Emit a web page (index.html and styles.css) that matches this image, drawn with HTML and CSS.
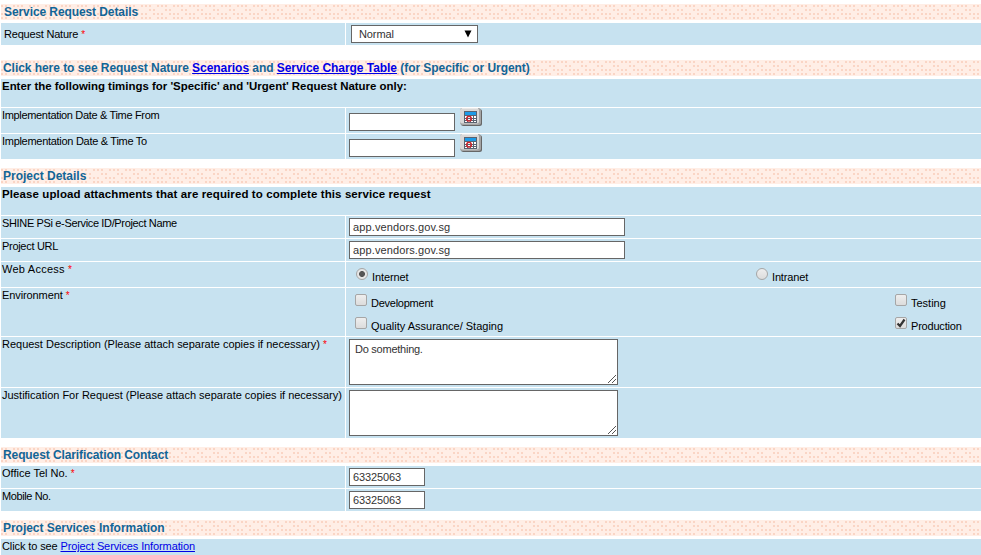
FILE: index.html
```html
<!DOCTYPE html>
<html lang="en">
<head>
<meta charset="utf-8">
<title>Service Request</title>
<link rel="stylesheet" href="styles.css">
</head>
<body>
<svg class="defs" width="0" height="0">
  <symbol id="cal" viewBox="0 0 22 18">
    <rect x="1" y="1" width="21" height="17" rx="2.5" fill="#666"/>
    <rect x="0" y="0" width="21" height="17" rx="2.5" fill="#a4a4a4"/>
    <rect x="0" y="0" width="19" height="15.5" rx="2.5" fill="#d8d8d8"/>
    <path d="M2 0.5H18" stroke="#e8e8e8"/>
    <rect x="4" y="3" width="13" height="12" fill="#5b6370"/>
    <rect x="5" y="4" width="11" height="3" fill="#1d9be8"/>
    <path d="M5 8h2v2h-2zM8 8h2v2h-2zM11 8h2v2h-2zM14 8h2v2h-2zM5 11h2v1h-2zM8 11h2v1h-2zM11 11h2v1h-2zM14 11h2v1h-2zM5 13h2v1h-2zM8 13h2v1h-2zM11 13h2v1h-2zM14 13h2v1h-2z" fill="#fff"/>
    <circle cx="9" cy="10.8" r="2.4" fill="none" stroke="#d8232a" stroke-width="1.3"/>
  </symbol>
</svg>
<main class="form">
  <h2 class="band first"><span class="t1">Service Request Details</span></h2>
  <div class="row h22 inset">
    <div class="label"><span class="t2">Request Nature</span> <i>*</i></div>
    <div class="cell"><div class="select"><span class="t13">Normal</span><svg width="8" height="8"><path d="M0.5 0.5H7.5L4 7.5Z"/></svg></div></div>
  </div>

  <h2 class="band second"><span class="t3">Click here to see Request Nature <a>Scenarios</a> and <a>Service Charge Table</a> (for Specific or Urgent)</span></h2>
  <div class="row full"><b class="t4">Enter the following timings for 'Specific' and 'Urgent' Request Nature only:</b></div>
  <div class="row h25"><div class="label"><span class="t5">Implementation Date &amp; Time From</span></div><div class="cell date"><div class="input short"></div><svg class="cal" width="22" height="18"><use href="#cal"/></svg></div></div>
  <div class="row h25"><div class="label"><span class="t6">Implementation Date &amp; Time To</span></div><div class="cell date"><div class="input short"></div><svg class="cal" width="22" height="18"><use href="#cal"/></svg></div></div>

  <h2 class="band"><span class="t7">Project Details</span></h2>
  <div class="row full"><b class="t8">Please upload attachments that are required to complete this service request</b></div>
  <div class="row h22"><div class="label"><span class="t9">SHINE PSi e-Service ID/Project Name</span></div><div class="cell"><div class="input long"><span class="t10">app.vendors.gov.sg</span></div></div></div>
  <div class="row h22"><div class="label"><span class="t11">Project URL</span></div><div class="cell"><div class="input long"><span class="t10">app.vendors.gov.sg</span></div></div></div>
  <div class="row h25"><div class="label"><span class="t12">Web Access</span> <i>*</i></div>
    <div class="cell access">
      <div class="opt"><span class="radio on"></span><span class="t13">Internet</span></div>
      <div class="opt"><span class="radio"></span><span class="t14">Intranet</span></div>
    </div></div>
  <div class="row h48"><div class="label"><span class="t15">Environment</span> <i>*</i></div>
    <div class="cell env">
      <div class="opt"><span class="check"></span><span class="t16">Development</span></div>
      <div class="opt"><span class="check"></span><span class="t17">Testing</span></div>
      <div class="opt"><span class="check"></span><span class="t18">Quality Assurance/ Staging</span></div>
      <div class="opt"><span class="check"><svg width="10" height="10"><path d="M1.5 5.5L4 8L8.5 1.5" fill="none" stroke="#333" stroke-width="2.2"/></svg></span><span class="t19">Production</span></div>
    </div></div>
  <div class="row h50"><div class="label"><span class="t20">Request Description (Please attach separate copies if necessary)</span> <i>*</i></div><div class="cell"><div class="area"><span class="t21">Do something.</span><svg width="8" height="8"><path d="M0 8L8 0M4 8L8 4"/></svg></div></div></div>
  <div class="row h50"><div class="label"><span class="t22">Justification For Request (Please attach separate copies if necessary)</span></div><div class="cell"><div class="area"><svg width="8" height="8"><path d="M0 8L8 0M4 8L8 4"/></svg></div></div></div>

  <h2 class="band"><span class="t23">Request Clarification Contact</span></h2>
  <div class="row h22"><div class="label"><span class="t24">Office Tel No.</span> <i>*</i></div><div class="cell"><div class="input phone"><span class="t25">63325063</span></div></div></div>
  <div class="row h22"><div class="label"><span class="t26">Mobile No.</span></div><div class="cell"><div class="input phone"><span class="t25">63325063</span></div></div></div>

  <h2 class="band"><span class="t27">Project Services Information</span></h2>
  <div class="row last"><span class="t28">Click to see <a>Project Services Information</a></span></div>
</main>
</body>
</html>
```
FILE: styles.css
```css
* { box-sizing: border-box; }
body { margin: 0; background: #fff; color: #000; font: 11px/13px "Liberation Sans", Arial, sans-serif; overflow: hidden; }
.defs { display: block; height: 0; }
.form { padding: 4px 0 0 1px; height: 555px; overflow: hidden; }
.band {
  margin: 9px 0 3px; height: 16px; padding-left: 2px;
  font-size: 12px; line-height: 16px; font-weight: bold; color: #126597; white-space: nowrap;
  background: #ffeee6 url("data:image/svg+xml,%3Csvg xmlns='http://www.w3.org/2000/svg' width='16' height='16'%3E%3Cpath fill='%23fad5c5' d='M0 1h2v2h-2zM4 1h2v2h-2zM12 1h2v2h-2zM4 5h2v2h-2zM8 5h2v2h-2zM0 9h2v2h-2zM8 9h2v2h-2zM12 9h2v2h-2zM0 13h2v2h-2zM4 13h2v2h-2zM12 13h2v2h-2z'/%3E%3C/svg%3E");
}
.band.first { margin-top: 0; padding-left: 3px; }
.band.second { margin-top: 15px; }
a { color: #0000e6; text-decoration: underline; }
.row { display: flex; gap: 1px; white-space: nowrap; }
.row + .row { margin-top: 1px; }
.label, .cell, .full, .last { background: #c7e2f0; }
.label { width: 344px; padding: 1px 0 0 1px; }
.cell { flex: 1; padding: 2px 0 0 3px; }
.inset .label { padding: 5px 0 0 3px; }
.inset .cell { padding-left: 5px; }
.label i { color: #f00; font-style: normal; font-size: 10px; line-height: 10px; }
.h22 { height: 22px; }
.h25 { height: 25px; }
.h48 { height: 48px; }
.h50 { height: 50px; }
.full { height: 28px; padding: 1px 0 0 1px; }
.last { height: 16px; padding: 1px 0 0 1px; }
.select, .input, .area { background: #fff; border: 1px solid #666; color: #333; }
.select { width: 127px; height: 18px; padding: 2px 5px 0 7px; display: flex; justify-content: space-between; line-height: 13px; }
.select svg { margin-top: 2px; fill: #000; }
.input { height: 18px; padding: 2px 0 0 3px; }
.short { width: 106px; }
.long { width: 276px; }
.phone { width: 76px; }
.date { display: flex; gap: 5px; padding-top: 0; }
.date .input { margin-top: 5px; }
.area { width: 269px; height: 46px; padding: 3px 1px 1px 5px; display: flex; justify-content: space-between; }
.area svg { margin: auto 0 0 auto; stroke: #555; }
.opt { display: flex; }
.access { display: grid; grid-template-columns: 400px 1fr; padding: 6px 0 0 10px; }
.env { display: grid; grid-template-columns: 540px 1fr; grid-template-rows: 23px 23px; padding: 6px 0 0 9px; }
.opt > span:last-child { margin-top: 3px; }
.radio { width: 12px; height: 12px; border: 1px solid #a6a6a6; border-radius: 50%; background: linear-gradient(#eee, #dcdcdc); margin-right: 4px; }
.radio.on { background: radial-gradient(circle, #555 0 2.6px, #e6e6e6 3.3px); }
.check { width: 12px; height: 12px; border: 1px solid #a6a6a6; border-radius: 2px; background: linear-gradient(#eee, #dcdcdc); margin-right: 4px; }
.check svg { display: block; }

.t1 { letter-spacing: -0.09px; }
.t2 { letter-spacing: -0.2px; }
.t3 { letter-spacing: -0.05px; }
.t4 { font-size: 11.45px; }
.t5 { letter-spacing: -0.33px; }
.t6 { letter-spacing: -0.29px; }
.t8 { font-size: 11.5px; letter-spacing: 0.1px; }
.t9 { letter-spacing: -0.35px; }
.t10 { letter-spacing: 0.12px; }
.t11 { letter-spacing: -0.3px; }
.t12 { letter-spacing: 0.25px; }
.t13, .t15, .t23, .t25 { letter-spacing: -0.1px; }
.t14 { letter-spacing: -0.15px; }
.t16, .t21 { letter-spacing: -0.25px; }
.t19 { letter-spacing: -0.2px; }
.t20, .t22 { letter-spacing: -0.01px; }
.t26 { letter-spacing: -0.4px; }
.t27 { letter-spacing: -0.04px; }
.t28 { letter-spacing: -0.11px; }
```
